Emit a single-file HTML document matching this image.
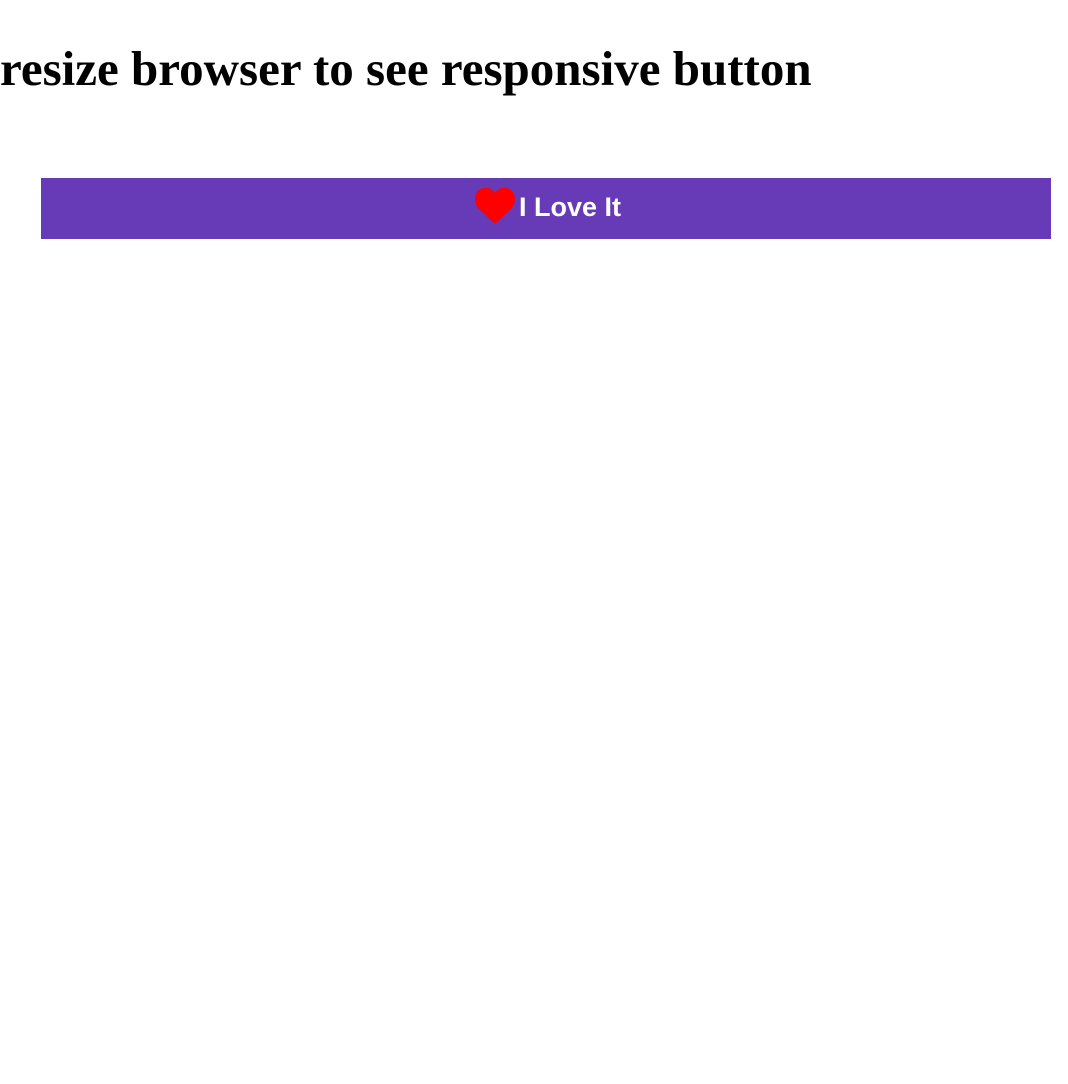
<!DOCTYPE html>
<html><head><style>
body{margin:0;background:#fff;width:1068px;height:1084px;position:relative;overflow:hidden}
h1{position:absolute;left:0;top:37px;margin:0;font:bold 49px "Liberation Serif",serif;line-height:64px;white-space:nowrap}
.btn{position:absolute;left:41px;top:178px;width:1010px;height:61px;background:#673ab7}
.btn svg{position:absolute;left:433px;top:9px}
.btn span{position:absolute;left:478px;top:13px;color:#fff;font:bold 27px "Liberation Sans",sans-serif;line-height:32px;white-space:nowrap}
</style></head><body>
<h1>resize browser to see responsive button</h1>
<div class="btn"><svg width="42" height="38" viewBox="0 0 42 38"><path d="M21 37 L5 22 C0 17 0 8 4 4 C9 -1 17 0 21 6 C25 0 33 -1 38 4 C42 8 42 17 37 22 Z" fill="#f00"/></svg><span>I Love It</span></div>
</body></html>
